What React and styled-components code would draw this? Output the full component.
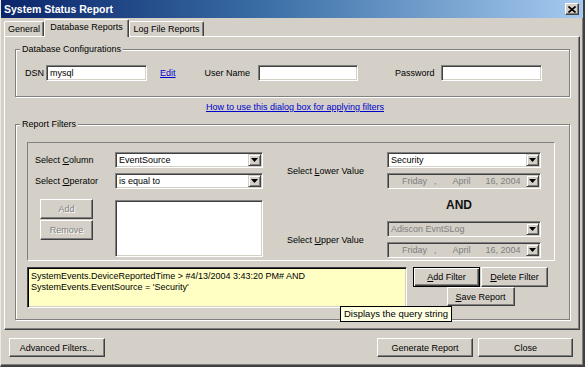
import React from 'react';
import styled, { createGlobalStyle } from 'styled-components';

const GlobalStyle = createGlobalStyle`
  html, body {
    margin: 0;
    padding: 0;
    background: #d4d0c8;
  }
  * { box-sizing: border-box; }
  body {
    font-family: 'Liberation Sans', Arial, sans-serif;
    font-size: 9px;
    color: #000;
  }
`;

const Window = styled.div`
  width: 585px;
  height: 367px;
  background: #d4d0c8;
  border-left: 1px solid #ebe9e4;
  border-right: 2px solid #404040;
  border-bottom: 2px solid #404040;
  box-shadow: inset -1px -1px 0 #808080;
  display: flex;
  flex-direction: column;
`;

const TitleBar = styled.div`
  height: 18px;
  flex: none;
  display: flex;
  align-items: center;
  justify-content: space-between;
  padding: 0 4px 0 3px;
  background: linear-gradient(to right, #0a246a 0%, #3a6ea5 45%, #a6caf0 100%);
`;

const Title = styled.span`
  color: #fff;
  font-weight: bold;
  font-size: 10.5px;
`;

const CloseBox = styled.div`
  width: 14px;
  height: 12px;
  background: #d4d0c8;
  border: 1px solid;
  border-color: #fff #404040 #404040 #fff;
  box-shadow: inset -1px -1px 0 #808080;
  display: flex;
  align-items: center;
  justify-content: center;
`;

const Body = styled.div`
  flex: 1;
  display: flex;
  flex-direction: column;
  padding: 0 3px;
`;

const TabStrip = styled.div`
  height: 17px;
  margin-top: 1px;
  display: flex;
  align-items: flex-end;
  position: relative;
  z-index: 1;
`;

const Tab = styled.div`
  width: ${p => p.$w}px;
  height: ${p => (p.$active ? 18 : 15)}px;
  margin-bottom: ${p => (p.$active ? -1 : 0)}px;
  padding-bottom: ${p => (p.$active ? 3 : 0)}px;
  background: #d4d0c8;
  border-top: 1px solid #fff;
  border-left: 1px solid #fff;
  border-right: 1px solid #404040;
  box-shadow: inset -1px 0 0 #808080;
  border-radius: 2px 2px 0 0;
  display: flex;
  align-items: center;
  justify-content: center;
  white-space: nowrap;
`;

const TabPanel = styled.div`
  height: 294px;
  flex: none;
  border: 1px solid;
  border-color: #fff #404040 #404040 #fff;
  box-shadow: inset -1px -1px 0 #808080;
  padding: 12px 9px 0 10px;
  display: flex;
  flex-direction: column;
`;

const GroupBox = styled.div`
  position: relative;
  border: 1px solid #808080;
  box-shadow: inset 1px 1px 0 #fff, 1px 1px 0 #fff;
  padding: ${p => p.$pad};
  margin-top: ${p => p.$top || 0}px;
`;

const Caption = styled.span`
  position: absolute;
  top: -6px;
  left: 4px;
  padding: 0 2px;
  line-height: 11px;
  background: #d4d0c8;
`;

const ConfigRow = styled.div`
  display: flex;
  align-items: center;
  height: 16px;
`;

const Label = styled.span`
  margin-left: ${p => p.$ml || 0}px;
  margin-right: ${p => p.$mr || 0}px;
  white-space: nowrap;
`;

const TextBox = styled.div`
  width: ${p => p.$w}px;
  height: 16px;
  background: #fff;
  border: 1px solid;
  border-color: #808080 #fff #fff #808080;
  box-shadow: inset 1px 1px 0 #404040, inset -1px -1px 0 #d4d0c8;
  padding: 0 3px;
  line-height: 14px;
`;

const Link = styled.a`
  color: #0000cc;
  text-decoration: underline;
  margin-left: ${p => p.$ml || 0}px;
  line-height: 11px;
  cursor: pointer;
`;

const HelpLink = styled(Link)`
  align-self: center;
  margin-top: 5px;
  margin-left: 5px;
`;

const InnerPanel = styled.div`
  width: 528px;
  height: 119px;
  border: 1px solid;
  border-color: #808080 #fff #fff #808080;
  padding: 9px 0 0 7px;
  display: flex;
`;

const LeftPane = styled.div`
  display: grid;
  grid-template-columns: 80px 148px;
  grid-template-rows: 16px 16px auto;
  row-gap: 5px;
  align-items: center;
`;

const ButtonStack = styled.div`
  align-self: start;
  margin-top: 5px;
  padding-left: 5px;
  display: flex;
  flex-direction: column;
  gap: 1px;
`;

const ListBox = styled.div`
  align-self: start;
  margin-top: 6px;
  height: 57px;
  background: #fff;
  border: 1px solid;
  border-color: #808080 #fff #fff #808080;
  box-shadow: inset 1px 1px 0 #404040, inset -1px -1px 0 #d4d0c8;
`;

const RightPane = styled.div`
  margin-left: 24px;
  display: flex;
  flex-direction: column;
`;

const ValueGroup = styled.div`
  display: flex;
  align-items: center;
`;

const ValueLabel = styled.span`
  width: 100px;
  white-space: nowrap;
`;

const ComboStack = styled.div`
  width: 154px;
  display: flex;
  flex-direction: column;
  gap: 5px;
`;

const AndText = styled.div`
  height: 32px;
  margin-left: 100px;
  width: 154px;
  padding-right: 10px;
  display: flex;
  align-items: center;
  justify-content: center;
  font-size: 12px;
  font-weight: bold;
  color: #111;
`;

const Combo = styled.div`
  height: 16px;
  background: ${p => (p.$disabled ? '#d4d0c8' : '#fff')};
  color: ${p => (p.$disabled ? '#808080' : '#000')};
  border: 1px solid;
  border-color: #808080 #fff #fff #808080;
  box-shadow: inset 1px 1px 0 #404040, inset -1px -1px 0 #d4d0c8;
  display: flex;
  align-items: center;
  padding: 0 1px 0 3px;
`;

const ComboText = styled.span`
  flex: 1;
  white-space: nowrap;
  overflow: hidden;
`;

const DatePart = styled.span`
  margin-left: ${p => p.$ml}px;
  white-space: nowrap;
`;

const ArrowButton = styled.div`
  width: 13px;
  height: 12px;
  flex: none;
  margin-left: auto;
  background: #d4d0c8;
  border: 1px solid;
  border-color: #d4d0c8 #404040 #404040 #d4d0c8;
  box-shadow: inset 1px 1px 0 #fff, inset -1px -1px 0 #808080;
  display: flex;
  align-items: center;
  justify-content: center;
`;

const Button = styled.div`
  width: ${p => p.$w}px;
  height: ${p => p.$h || 20}px;
  flex: none;
  margin-left: ${p => p.$ml || 0}px;
  background: #d4d0c8;
  border: 1px solid;
  border-color: ${p => (p.$default ? '#000' : '#fff #404040 #404040 #fff')};
  box-shadow: ${p => (p.$default
    ? 'inset 1px 1px 0 #fff, inset -1px -1px 0 #404040, inset -2px -2px 0 #808080'
    : 'inset -1px -1px 0 #808080')};
  color: ${p => (p.$disabled ? '#808080' : '#000')};
  text-shadow: ${p => (p.$disabled ? '1px 1px 0 #fff' : 'none')};
  display: flex;
  align-items: center;
  justify-content: center;
  white-space: nowrap;
`;

const QueryRow = styled.div`
  position: relative;
  margin-top: 6px;
  display: flex;
  align-items: flex-start;
`;

const QueryBox = styled.div`
  width: 380px;
  height: 41px;
  background: #ffffc4;
  border: 1px solid;
  border-color: #404040 #fff #fff #404040;
  box-shadow: inset 1px 1px 0 #000, inset -1px -1px 0 #d4d0c8;
  padding: 3px 3px;
  line-height: 11px;
  white-space: pre-wrap;
`;

const FilterButtons = styled.div`
  margin-left: 6px;
  display: flex;
  flex-direction: column;
  align-items: center;
`;

const ButtonRow = styled.div`
  display: flex;
  gap: 1px;
`;

const Tooltip = styled.div`
  position: absolute;
  left: 313px;
  top: 39px;
  background: #ffffe1;
  border: 1px solid #000;
  padding: 1px 3px;
  font-size: 9.5px;
  line-height: 12px;
  white-space: nowrap;
`;

const Footer = styled.div`
  display: flex;
  margin-top: 8px;
  padding: 0 7px 0 5px;
`;

const Spacer = styled.div`
  flex: 1;
`;

const Arrow = () => (
  <svg width="7" height="4" viewBox="0 0 7 4">
    <path d="M0 0h7L3.5 4z" fill="#000" />
  </svg>
);

const DropDown = ({ children, disabled }) => (
  <Combo $disabled={disabled}>
    <ComboText>{children}</ComboText>
    <ArrowButton><Arrow /></ArrowButton>
  </Combo>
);

const DateField = () => (
  <Combo $disabled>
    <DatePart $ml={11}>Friday</DatePart>
    <DatePart $ml={7}>,</DatePart>
    <DatePart $ml={16}>April</DatePart>
    <DatePart $ml={15}>16, 2004</DatePart>
    <ArrowButton><Arrow /></ArrowButton>
  </Combo>
);

const query = "SystemEvents.DeviceReportedTime > #4/13/2004 3:43:20 PM# AND\nSystemEvents.EventSource = 'Security'";

export default function App() {
  return (
    <>
      <GlobalStyle />
      <Window>
        <TitleBar>
          <Title>System Status Report</Title>
          <CloseBox>
            <svg width="8" height="7" viewBox="0 0 8 7">
              <path d="M0.5 0.5L7.5 6.5M7.5 0.5L0.5 6.5" stroke="#000" strokeWidth="1.6" />
            </svg>
          </CloseBox>
        </TitleBar>
        <Body>
          <TabStrip>
            <Tab $w={40}>General</Tab>
            <Tab $w={85} $active>Database Reports</Tab>
            <Tab $w={75}>Log File Reports</Tab>
          </TabStrip>
          <TabPanel>
            <GroupBox $pad="15px 9px 15px 9px">
              <Caption>Database Configurations</Caption>
              <ConfigRow>
                <Label $mr={2}>DSN</Label>
                <TextBox $w={101}>mysql</TextBox>
                <Link $ml={13}>Edit</Link>
                <Label $ml={29} $mr={8}>User Name</Label>
                <TextBox $w={100} />
                <Label $ml={37} $mr={6}>Password</Label>
                <TextBox $w={101} />
              </ConfigRow>
            </GroupBox>
            <HelpLink>How to use this dialog box for applying filters</HelpLink>
            <GroupBox $top={11} $pad="17px 13px 11px 11px">
              <Caption>Report Filters</Caption>
              <InnerPanel>
                <LeftPane>
                  <Label>Select <u>C</u>olumn</Label>
                  <DropDown>EventSource</DropDown>
                  <Label>Select <u>O</u>perator</Label>
                  <DropDown>is equal to</DropDown>
                  <ButtonStack>
                    <Button $w={53} $disabled>Add</Button>
                    <Button $w={53} $disabled>Remove</Button>
                  </ButtonStack>
                  <ListBox />
                </LeftPane>
                <RightPane>
                  <ValueGroup>
                    <ValueLabel>Select <u>L</u>ower Value</ValueLabel>
                    <ComboStack>
                      <DropDown>Security</DropDown>
                      <DateField />
                    </ComboStack>
                  </ValueGroup>
                  <AndText>AND</AndText>
                  <ValueGroup>
                    <ValueLabel>Select <u>U</u>pper Value</ValueLabel>
                    <ComboStack>
                      <DropDown disabled>Adiscon EvntSLog</DropDown>
                      <DateField />
                    </ComboStack>
                  </ValueGroup>
                </RightPane>
              </InnerPanel>
              <QueryRow>
                <QueryBox>{query}</QueryBox>
                <FilterButtons>
                  <ButtonRow>
                    <Button $w={67} $default><u>A</u>dd Filter</Button>
                    <Button $w={67}><u>D</u>elete Filter</Button>
                  </ButtonRow>
                  <Button $w={68} $h={19}><u>S</u>ave Report</Button>
                </FilterButtons>
                <Tooltip>Displays the query string</Tooltip>
              </QueryRow>
            </GroupBox>
          </TabPanel>
          <Footer>
            <Button $w={96} $h={19}>Advanced Filters...</Button>
            <Spacer />
            <Button $w={96} $h={19}>Generate Report</Button>
            <Button $w={95} $h={19} $ml={5}>Close</Button>
          </Footer>
        </Body>
      </Window>
    </>
  );
}
